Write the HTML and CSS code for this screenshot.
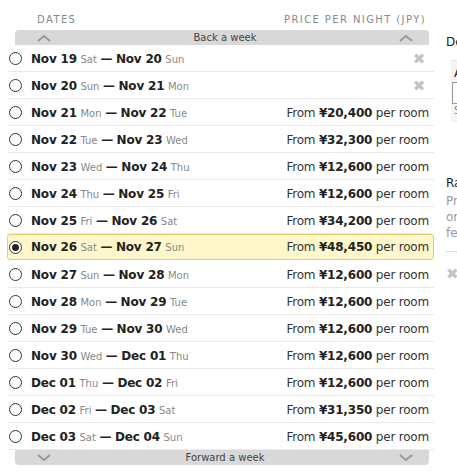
FILE: index.html
```html
<!DOCTYPE html>
<html>
  <head>
    <title>Choose your dates</title>
    <link rel="stylesheet" href="styles.css">
  </head>
  <body>
    <div class="layout">
      <div class="dates-panel">
        <div class="dates-head">
          <span>Dates</span>
          <span>Price per night (JPY)</span>
        </div>

        <div class="week-bar week-back">
          <svg class="chev" viewBox="0 0 14 8"><path d="M1 7 L7 2 L13 7" /></svg>
          <span>Back a week</span>
          <svg class="chev" viewBox="0 0 14 8"><path d="M1 7 L7 2 L13 7" /></svg>
        </div>

        <ul class="stay-list">
          <li class="stay">
            <span class="radio"></span>
            <span class="range"><b>Nov 19</b> <small>Sat</small> <b>—</b> <b>Nov 20</b> <small>Sun</small></span>
            <span class="na">✖</span>
          </li>
          <li class="stay">
            <span class="radio"></span>
            <span class="range"><b>Nov 20</b> <small>Sun</small> <b>—</b> <b>Nov 21</b> <small>Mon</small></span>
            <span class="na">✖</span>
          </li>
          <li class="stay">
            <span class="radio"></span>
            <span class="range"><b>Nov 21</b> <small>Mon</small> <b>—</b> <b>Nov 22</b> <small>Tue</small></span>
            <span class="price">From <b>¥20,400</b> per room</span>
          </li>
          <li class="stay">
            <span class="radio"></span>
            <span class="range"><b>Nov 22</b> <small>Tue</small> <b>—</b> <b>Nov 23</b> <small>Wed</small></span>
            <span class="price">From <b>¥32,300</b> per room</span>
          </li>
          <li class="stay">
            <span class="radio"></span>
            <span class="range"><b>Nov 23</b> <small>Wed</small> <b>—</b> <b>Nov 24</b> <small>Thu</small></span>
            <span class="price">From <b>¥12,600</b> per room</span>
          </li>
          <li class="stay">
            <span class="radio"></span>
            <span class="range"><b>Nov 24</b> <small>Thu</small> <b>—</b> <b>Nov 25</b> <small>Fri</small></span>
            <span class="price">From <b>¥12,600</b> per room</span>
          </li>
          <li class="stay">
            <span class="radio"></span>
            <span class="range"><b>Nov 25</b> <small>Fri</small> <b>—</b> <b>Nov 26</b> <small>Sat</small></span>
            <span class="price">From <b>¥34,200</b> per room</span>
          </li>
          <li class="stay selected">
            <span class="radio checked"></span>
            <span class="range"><b>Nov 26</b> <small>Sat</small> <b>—</b> <b>Nov 27</b> <small>Sun</small></span>
            <span class="price">From <b>¥48,450</b> per room</span>
          </li>
          <li class="stay">
            <span class="radio"></span>
            <span class="range"><b>Nov 27</b> <small>Sun</small> <b>—</b> <b>Nov 28</b> <small>Mon</small></span>
            <span class="price">From <b>¥12,600</b> per room</span>
          </li>
          <li class="stay">
            <span class="radio"></span>
            <span class="range"><b>Nov 28</b> <small>Mon</small> <b>—</b> <b>Nov 29</b> <small>Tue</small></span>
            <span class="price">From <b>¥12,600</b> per room</span>
          </li>
          <li class="stay">
            <span class="radio"></span>
            <span class="range"><b>Nov 29</b> <small>Tue</small> <b>—</b> <b>Nov 30</b> <small>Wed</small></span>
            <span class="price">From <b>¥12,600</b> per room</span>
          </li>
          <li class="stay">
            <span class="radio"></span>
            <span class="range"><b>Nov 30</b> <small>Wed</small> <b>—</b> <b>Dec 01</b> <small>Thu</small></span>
            <span class="price">From <b>¥12,600</b> per room</span>
          </li>
          <li class="stay">
            <span class="radio"></span>
            <span class="range"><b>Dec 01</b> <small>Thu</small> <b>—</b> <b>Dec 02</b> <small>Fri</small></span>
            <span class="price">From <b>¥12,600</b> per room</span>
          </li>
          <li class="stay">
            <span class="radio"></span>
            <span class="range"><b>Dec 02</b> <small>Fri</small> <b>—</b> <b>Dec 03</b> <small>Sat</small></span>
            <span class="price">From <b>¥31,350</b> per room</span>
          </li>
          <li class="stay">
            <span class="radio"></span>
            <span class="range"><b>Dec 03</b> <small>Sat</small> <b>—</b> <b>Dec 04</b> <small>Sun</small></span>
            <span class="price">From <b>¥45,600</b> per room</span>
          </li>
        </ul>

        <div class="week-bar week-forward">
          <svg class="chev" viewBox="0 0 14 8"><path d="M1 1 L7 6 L13 1" /></svg>
          <span>Forward a week</span>
          <svg class="chev" viewBox="0 0 14 8"><path d="M1 1 L7 6 L13 1" /></svg>
        </div>
      </div>

      <div class="side-panel">
        <div class="side-title">Details</div>
        <div class="side-box">
          <div class="side-label">Adults</div>
          <div class="side-input"></div>
          <div class="side-note">Select</div>
        </div>
        <div class="side-rates">
          <div class="side-label">Rates</div>
          <p>Prices are per room, per night<br>or stay, excluding taxes and<br>fees.</p>
        </div>
        <div class="side-close">✖</div>
      </div>
    </div>
  </body>
</html>
```

FILE: styles.css
```css
body {
  margin: 0;
  padding: 0;
  background-color: #fff;
  font-family: "DejaVu Sans", Verdana, sans-serif;
  color: #222;
  overflow: hidden;
}

.layout {
  display: flex;
  gap: 12px;
}

/* date list */

.dates-panel {
  width: 427px;
  flex-shrink: 0;
  padding-left: 7px;
}

.dates-head {
  display: flex;
  justify-content: space-between;
  padding: 14px 8px 0 30px;
  height: 16px;
  font-size: 10px;
  letter-spacing: 1.4px;
  text-transform: uppercase;
  color: #888;
}

.week-bar {
  display: flex;
  align-items: center;
  justify-content: space-between;
  margin: 0 5px 0 8px;
  padding: 0 16px 0 22px;
  height: 15px;
  background-color: #d8d8d8;
  font-size: 10px;
  color: #444;
}

.week-back {
  border-radius: 4px 4px 0 0;
}

.week-forward {
  border-radius: 0 0 4px 4px;
}

.chev {
  width: 14px;
  height: 8px;
  fill: none;
  stroke: #999;
  stroke-width: 2;
}

.stay-list {
  list-style: none;
  margin: 0;
  padding: 0;
}

.stay {
  display: flex;
  align-items: center;
  height: 27px;
  padding: 1px 5px 0 2px;
  border-bottom: 1px solid #e9e9e9;
  font-size: 12px;
  letter-spacing: -0.2px;
  box-sizing: border-box;
}

.stay.selected {
  background-color: #fff7cc;
  border: 1px solid #e2cf70;
  border-radius: 3px;
  padding: 0 4px 0 1px;
  height: 26px;
  margin-bottom: 1px;
}

.radio {
  width: 11px;
  height: 11px;
  border: 1px solid #333;
  border-radius: 50%;
  margin-right: 9px;
  background-color: #fff;
  position: relative;
}

.radio.checked::after {
  content: "";
  position: absolute;
  top: 2px;
  left: 2px;
  width: 7px;
  height: 7px;
  border-radius: 50%;
  background-color: #222;
}

.range b {
  color: #222;
}

.range small {
  font-size: 10px;
  letter-spacing: 0;
  color: #888;
}

.price {
  margin-left: auto;
  color: #333;
}

.price b {
  color: #222;
}

.na {
  margin-left: auto;
  margin-right: 4px;
  font-size: 15px;
  color: #c4c4c4;
}

/* details column, mostly cut off at the window edge */

.side-panel {
  width: 200px;
  flex-shrink: 0;
  padding-top: 35px;
  font-size: 12px;
}

.side-title {
  color: #222;
  margin-bottom: 11px;
}

.side-box {
  margin-left: 5px;
  padding: 5px 0 6px 3px;
  background-color: #f4f4f4;
  border-top: 1px solid #e6e6e6;
}

.side-label {
  color: #222;
}

.side-input {
  height: 20px;
  margin: 2px 0 1px -2px;
  border: 1px solid #999;
  background-color: #fff;
}

.side-note {
  font-size: 10px;
  color: #888;
}

.side-rates {
  margin-top: 54px;
  padding-bottom: 10px;
  border-bottom: 1px solid #ddd;
}

.side-rates p {
  margin: 3px 0 0;
  line-height: 16px;
  color: #999;
}

.side-close {
  margin-top: 13px;
  font-size: 15px;
  color: #c4c4c4;
}
```
